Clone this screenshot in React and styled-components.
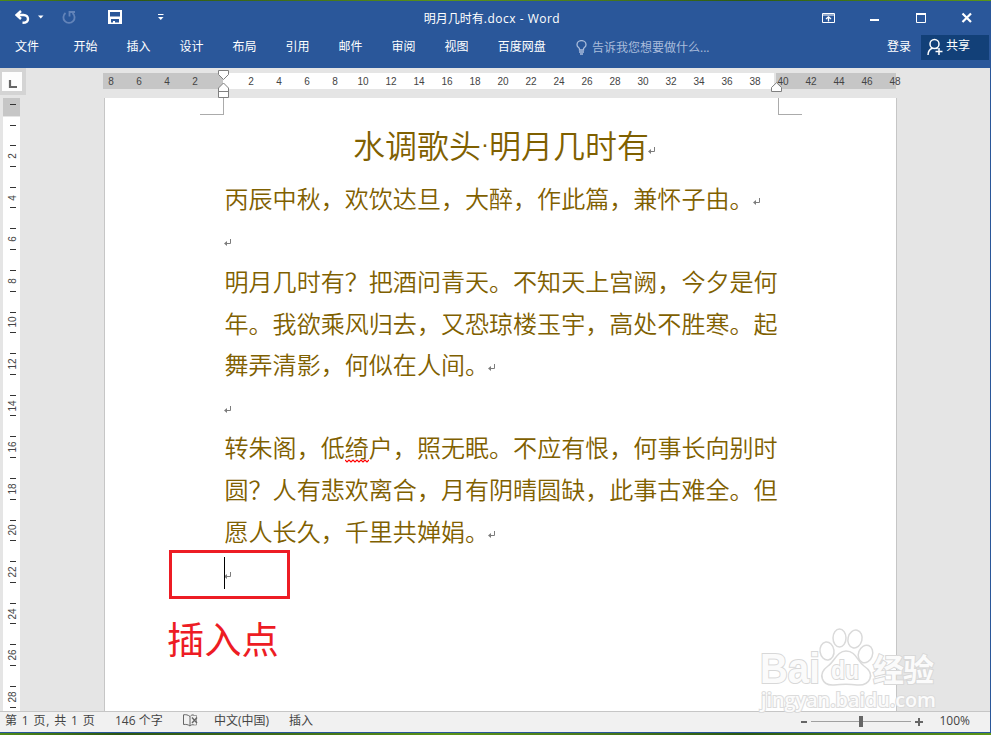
import React from 'react';
import styled, { createGlobalStyle } from 'styled-components';

const tabs = ['开始', '插入', '设计', '布局', '引用', '邮件', '审阅', '视图', '百度网盘'];
const leftNumbers = [8, 6, 4, 2, ''];
const rightNumbers = new Array(24).fill(null).map((_, index) => (index + 1) * 2);
const sideNumbers = new Array(14).fill(null).map((_, index) => (index + 1) * 2);

const ReturnMark = () => (
  <MarkIcon width="8" height="8" viewBox="0 0 8 8">
    <path d="M6.5 0V4.5H1" fill="none" stroke="#7c7c7c" />
    <path d="M0 4.5L3 2V7Z" fill="#7c7c7c" />
  </MarkIcon>
);

const TitleBar = () => (
  <TitleRow>
    <QuickAccess>
      <svg width="160" height="16" viewBox="0 0 160 16">
        <path d="M6 1L1.5 5L6 9M2 5H8.5C11.5 5 13 6.8 13 9S11.5 12.8 7.5 12.8" fill="none" stroke="#fff" strokeWidth="2.4" />
        <path d="M23 5.5H28.5L25.8 8.5Z" fill="#fff" />
        <path d="M50.5 3A5.6 5.6 0 1 0 57.5 3" fill="none" stroke="#6384b9" strokeWidth="1.8" />
        <path d="M54.5 6.5V2H60" fill="none" stroke="#6384b9" strokeWidth="1.8" />
        <path fillRule="evenodd" d="M93 0H107V14H93ZM95 2V6.5H105V2ZM96 9V12.5H98V11H100V12.5H104V9Z" fill="#fff" />
        <path d="M143 4.5H148.5" stroke="#fff" />
        <path d="M143 7H148.5L145.75 10Z" fill="#fff" />
      </svg>
    </QuickAccess>
    <FileName>明月几时有<span>.docx - Word</span></FileName>
    <WindowButtons>
      <svg width="152" height="14" viewBox="0 0 152 14" fill="none" stroke="#fff">
        <path d="M.5 2.5H12.5V11.5H.5ZM.5 4H12.5" />
        <path d="M6.5 10.5V6M4 8L6.5 5.8L9 8" strokeWidth="1.3" />
        <path d="M48 9H57" strokeWidth="2" />
        <path d="M94.5 2V11.5H103.5V2" />
        <path d="M94 3H104" strokeWidth="2" />
        <path d="M140.5 2.5L149 11M149 2.5L140.5 11" strokeWidth="2.2" />
      </svg>
    </WindowButtons>
  </TitleRow>
);

const Ribbon = () => (
  <TabRow>
    <FileTab>文件</FileTab>
    <TabList>
      {tabs.map((tab) => (
        <Tab key={tab}>{tab}</Tab>
      ))}
    </TabList>
    <TellMe>
      <svg width="11" height="15" viewBox="0 0 11 15" fill="none" stroke="#a9bcdb" strokeWidth="1.3">
        <path d="M3.5 10V9C3.5 7.8 1 7 1 4.7A4.5 4.1 0 0 1 10 4.7C10 7 7.5 7.8 7.5 9V10Z" />
        <path d="M3 12H8M4 14H7" />
      </svg>
      告诉我您想要做什么...
    </TellMe>
    <Login>登录</Login>
    <Share>
      <svg width="16" height="18" viewBox="0 0 16 18" fill="none" stroke="#fff" strokeWidth="1.5">
        <circle cx="7.5" cy="6" r="4.5" />
        <path d="M1 17C1 13.5 3 11 5.5 10.2M9.3 10L10.5 11M12 10V17M8.5 13.5H15.5" />
      </svg>
      共享
    </Share>
  </TabRow>
);

const HorizontalRuler = () => (
  <RulerRow>
    <TabSelector>
      <svg width="20" height="19" viewBox="0 0 20 19">
        <path d="M8 8V15H15" fill="none" stroke="#666" strokeWidth="2.2" />
      </svg>
    </TabSelector>
    <RulerTrack>
      <RulerNumbers>
        {[...leftNumbers, ...rightNumbers].map((number, index) => (
          <RulerNumber key={index}>{number}</RulerNumber>
        ))}
      </RulerNumbers>
      <IndentMarker $left={115} $top={-3}>
        <svg width="12" height="28" viewBox="0 0 12 28" fill="#fff" stroke="#808080">
          <path d="M.5 .5H10.5V4.5L5.5 9.5L.5 4.5Z" />
          <path d="M5.5 13L10.5 18V27.5H.5V18ZM.5 21.5H10.5" />
        </svg>
      </IndentMarker>
      <IndentMarker $left={668} $top={9}>
        <svg width="12" height="12" viewBox="0 0 12 12" fill="#fff" stroke="#808080">
          <path d="M5.5 .7L10.5 5.5V9.5H.5V5.5Z" />
        </svg>
      </IndentMarker>
    </RulerTrack>
  </RulerRow>
);

const VerticalRuler = () => (
  <SideRuler>
    <SideMargin><Tick /></SideMargin>
    <SideLead><Tick /></SideLead>
    {sideNumbers.map((number) => (
      <SideGroup key={number}>
        <Tick />
        <SideNumber>{number}</SideNumber>
        <Tick />
      </SideGroup>
    ))}
  </SideRuler>
);

const Document = () => (
  <Page>
    <Corners>
      <Corner $side="right" />
      <Corner $side="left" />
    </Corners>
    <Heading>水调歌头<Dot>·</Dot>明月几时有<ReturnMark /></Heading>
    <Line>丙辰中秋，欢饮达旦，大醉，作此篇，兼怀子由。<ReturnMark /></Line>
    <Line><ReturnMark /></Line>
    <Line>明月几时有？把酒问青天。不知天上宫阙，今夕是何</Line>
    <Line>年。我欲乘风归去，又恐琼楼玉宇，高处不胜寒。起</Line>
    <Line>舞弄清影，何似在人间。<ReturnMark /></Line>
    <Line><ReturnMark /></Line>
    <Line>
      转朱阁，低
      <Misspelled>
        绮
        <svg width="24" height="4" viewBox="0 0 24 4">
          <path d="M0 1L2 3L4 1L6 3L8 1L10 3L12 1L14 3L16 1L18 3L20 1L22 3L24 1" fill="none" stroke="#f00" strokeWidth="1.2" />
        </svg>
      </Misspelled>
      户，照无眠。不应有恨，何事长向别时
    </Line>
    <Line>圆？人有悲欢离合，月有阴晴圆缺，此事古难全。但</Line>
    <Line>愿人长久，千里共婵娟。<ReturnMark /></Line>
    <Line><ReturnMark /></Line>
    <Highlight><Caret /></Highlight>
    <Note>插入点</Note>
  </Page>
);

const Watermark = () => (
  <WatermarkLayer>
    <svg width="190" height="100" viewBox="0 0 190 100">
      <g fill="#fff" fillOpacity=".75" stroke="#dadada" strokeWidth="1.5">
        <ellipse cx="77" cy="31" rx="7" ry="9" transform="rotate(-8 77 31)" />
        <ellipse cx="89.5" cy="18" rx="6.5" ry="9" />
        <ellipse cx="105" cy="19" rx="7" ry="9" transform="rotate(14 105 19)" />
        <ellipse cx="115.5" cy="34" rx="7" ry="9" transform="rotate(20 115.5 34)" />
        <path d="M96 31C106 31 107 41 114 46C126 54 120 66 107 65C100 64 92 64 84 65C72 66 67 54 78 46C85 41 87 31 96 31Z" />
      </g>
      <g fill="#fbfbfb" stroke="#d8d8d8" strokeWidth="2" paintOrder="stroke" fontWeight="700">
        <text x="10" y="63" fontSize="42" textLength="60" lengthAdjust="spacingAndGlyphs" fontFamily="Liberation Sans, sans-serif">Bai</text>
        <text x="81" y="59" fontSize="26" textLength="28" lengthAdjust="spacingAndGlyphs" fontFamily="Liberation Sans, sans-serif">du</text>
        <text x="123" y="61" fontSize="31" textLength="61" fontFamily="Noto Sans CJK SC, sans-serif">经验</text>
        <text x="11" y="87" fontSize="19" textLength="175" lengthAdjust="spacingAndGlyphs" fontWeight="600" stroke="#dcdcdc" fontFamily="Open Sans, sans-serif">jingyan.baidu.com</text>
      </g>
    </svg>
  </WatermarkLayer>
);

const StatusBar = () => (
  <StatusRow>
    <StatusText $width={110} $spacing={0.85}>第 1 页, 共 1 页</StatusText>
    <StatusText $width={68}>146 个字</StatusText>
    <ProofIcon width="15" height="13" viewBox="0 0 15 13" fill="none" stroke="#666">
      <path d="M7 2.5C5 .8 3 .5 .5 .8V10.5C3 10.2 5 10.5 7 12V2.5C8 1.3 9 .8 10.5 .7M7 12C8 11 9 10.6 10.5 10.5" />
      <path d="M9 3.5L14 9M14 3.5L9 9" strokeWidth="1.4" />
      <path d="M9.5 1.5H13.5V11H9.5" strokeWidth=".6" />
    </ProofIcon>
    <StatusText $width={75}>中文(中国)</StatusText>
    <StatusText $width={40}>插入</StatusText>
    <Zoom>
      <svg width="124" height="12" viewBox="0 0 124 12" stroke="#666">
        <path d="M1 7H7M115 7H123M119 3V11" strokeWidth="2" />
        <path d="M11 6.5H111" stroke="#a0a0a0" />
        <path d="M61 1V12" strokeWidth="4" />
      </svg>
      100%
    </Zoom>
  </StatusRow>
);

const App = () => {
  return (
    <Desktop>
      <GlobalStyle />
      <Window>
        <TopArea>
          <TitleBar />
          <Ribbon />
        </TopArea>
        <Workspace>
          <HorizontalRuler />
          <DocumentArea>
            <VerticalRuler />
            <Document />
          </DocumentArea>
        </Workspace>
        <StatusBar />
      </Window>
      <Watermark />
    </Desktop>
  );
};

export default App;

const GlobalStyle = createGlobalStyle`
  * {
    box-sizing: border-box;
  }

  body {
    margin: 0;
    overflow: hidden;
    font-family: "Open Sans", "Noto Sans CJK SC", sans-serif;
    font-size: 12px;
  }

  svg {
    display: block;
    flex-shrink: 0;
  }
`;

const Desktop = styled.div`
  position: relative;
  width: 991px;
  height: 735px;
  padding: 1px 0 2px;
  background: linear-gradient(90deg, #4f8a17, #2d5613 12%, #3f6d18 28%, #5b9418 45%, #4a7a1c 60%, #2c5a12 75%, #5b9618);
`;

const Window = styled.div`
  display: flex;
  flex-direction: column;
  height: 732px;
  border-right: 1px solid #2a579a;
  border-bottom: 1px solid #2a579a;
`;

const TopArea = styled.header`
  height: 67px;
  background: #2a579a;
  color: #fff;
`;

const TitleRow = styled.div`
  display: flex;
  align-items: center;
  height: 33px;
`;

const QuickAccess = styled.div`
  width: 408px;
  padding-left: 15px;
`;

const FileName = styled.div`
  width: 168px;
  padding-top: 3px;
  text-align: center;
  line-height: 16px;
  white-space: nowrap;

  span {
    letter-spacing: 0.5px;
  }
`;

const WindowButtons = styled.div`
  margin-left: 246px;
`;

const TabRow = styled.nav`
  display: flex;
  align-items: center;
  height: 27px;
  line-height: 23px;
  white-space: nowrap;
`;

const FileTab = styled.div`
  width: 58px;
  padding: 0 0 2px 15px;
`;

const TabList = styled.div`
  display: flex;
  gap: 29px;
  width: 518px;
  padding: 0 0 2px 15.5px;
`;

const Tab = styled.div`
  min-width: 24px;
`;

const TellMe = styled.div`
  display: flex;
  align-items: center;
  gap: 5px;
  width: 311px;
  color: #a9bcdb;
`;

const Login = styled.div`
  width: 34px;
  padding-bottom: 2px;
`;

const Share = styled.div`
  display: flex;
  gap: 3px;
  width: 68px;
  height: 25px;
  padding-left: 6px;
  line-height: 22px;
  background: #124078;

  svg {
    margin-top: 3px;
  }
`;

const Workspace = styled.main`
  height: 643px;
  background: #e5e5e5;
`;

const RulerRow = styled.div`
  display: flex;
  height: 30px;
`;

const TabSelector = styled.div`
  width: 26px;
  height: 27px;
  padding: 4px 3px 4px 2px;
  background: #d4d4d4;

  svg {
    background: #fdfdfd;
  }
`;

const RulerTrack = styled.div`
  position: relative;
  width: 793px;
  height: 16px;
  margin: 5px 0 0 77px;
  background: linear-gradient(90deg, #c6c6c6 120px, #fff 120px 671px, #e5e5e5 671px 673px, #c6c6c6 673px);
`;

const RulerNumbers = styled.div`
  display: flex;
  margin-left: -6px;
`;

const RulerNumber = styled.span`
  flex: 0 0 28px;
  text-align: center;
  font: 10px/18px "Liberation Sans", sans-serif;
  color: #444;
`;

const IndentMarker = styled.div`
  position: absolute;
  left: ${props => props.$left}px;
  top: ${props => props.$top}px;
`;

const DocumentArea = styled.div`
  display: flex;
  height: 613px;
  overflow: hidden;
`;

const SideRuler = styled.div`
  width: 17px;
  margin-left: 3px;
  background: #fff;
`;

const SideMargin = styled.div`
  height: 19px;
  padding: 6px 0 0 7px;
  background: #c6c6c6;
  border-bottom: 1px solid #e5e5e5;
`;

const SideLead = styled.div`
  height: 18.2px;
  padding: 8px 0 0 7px;
`;

const SideGroup = styled.div`
  display: flex;
  flex-direction: column;
  justify-content: space-between;
  height: 41.6px;
  padding: 10px 0 10px 7px;
`;

const Tick = styled.div`
  width: 6px;
  height: 1px;
  background: #333;
`;

const SideNumber = styled.div`
  width: 14px;
  margin-left: -4px;
  text-align: center;
  font: 10px/12px "Liberation Sans", sans-serif;
  color: #444;
  transform: rotate(-90deg);
`;

const Page = styled.article`
  position: relative;
  width: 793px;
  margin-left: 84px;
  background: #fff;
  border: solid #c6c6c6;
  border-width: 0 1px;
  color: #7f6000;
  font-family: "Noto Sans CJK SC", sans-serif;
  font-weight: 350;
`;

const Corners = styled.div`
  display: flex;
  justify-content: space-between;
  padding: 0 94px 0 95px;
`;

const Corner = styled.div`
  width: 24px;
  height: 17px;
  border-bottom: 1px solid #ababab;
  border-${props => props.$side}: 1px solid #ababab;
`;

const Heading = styled.h1`
  display: flex;
  align-items: center;
  height: 58px;
  margin: 0 0 4px;
  padding-left: 248px;
  font-size: 32px;
  font-weight: 350;
  line-height: 48px;

  svg {
    margin: 13px 0 0 -1px;
  }
`;

const Dot = styled.span`
  width: 8px;
  text-align: center;
  font: 24px/48px "Liberation Sans", sans-serif;
`;

const Line = styled.div`
  display: flex;
  align-items: center;
  height: 41.6px;
  padding-left: 119.5px;
  font-size: 24.05px;
  line-height: 40px;
  white-space: nowrap;

  svg {
    margin: 8px 0 0 -1px;
  }
`;

const MarkIcon = styled.svg`
  overflow: visible;
`;

const Misspelled = styled.span`
  position: relative;

  svg {
    position: absolute;
    left: 0;
    bottom: 4px;
    margin: 0;
  }
`;

const Highlight = styled.div`
  position: absolute;
  left: 64px;
  top: 452px;
  width: 121px;
  height: 49px;
  padding: 4px 0 0 52px;
  border: 3px solid #ed1c24;
`;

const Caret = styled.div`
  width: 1px;
  height: 32px;
  background: #000;
`;

const Note = styled.div`
  position: absolute;
  left: 62px;
  top: 514px;
  font-size: 37.3px;
  font-weight: 400;
  line-height: 52px;
  color: #ed1c24;
`;

const WatermarkLayer = styled.div`
  position: absolute;
  left: 750px;
  top: 620px;
`;

const StatusRow = styled.footer`
  display: flex;
  align-items: center;
  height: 21px;
  padding: 0 20px 3px 5px;
  border-top: 1px solid #c6c6c6;
  background: #f1f1f1;
  color: #444;
  line-height: 16px;
  white-space: nowrap;
`;

const StatusText = styled.div`
  width: ${props => props.$width}px;
  letter-spacing: ${props => props.$spacing || 0}px;
`;

const ProofIcon = styled.svg`
  margin-right: 16px;
`;

const Zoom = styled.div`
  display: flex;
  align-items: center;
  gap: 15px;
  margin-left: auto;
`;
